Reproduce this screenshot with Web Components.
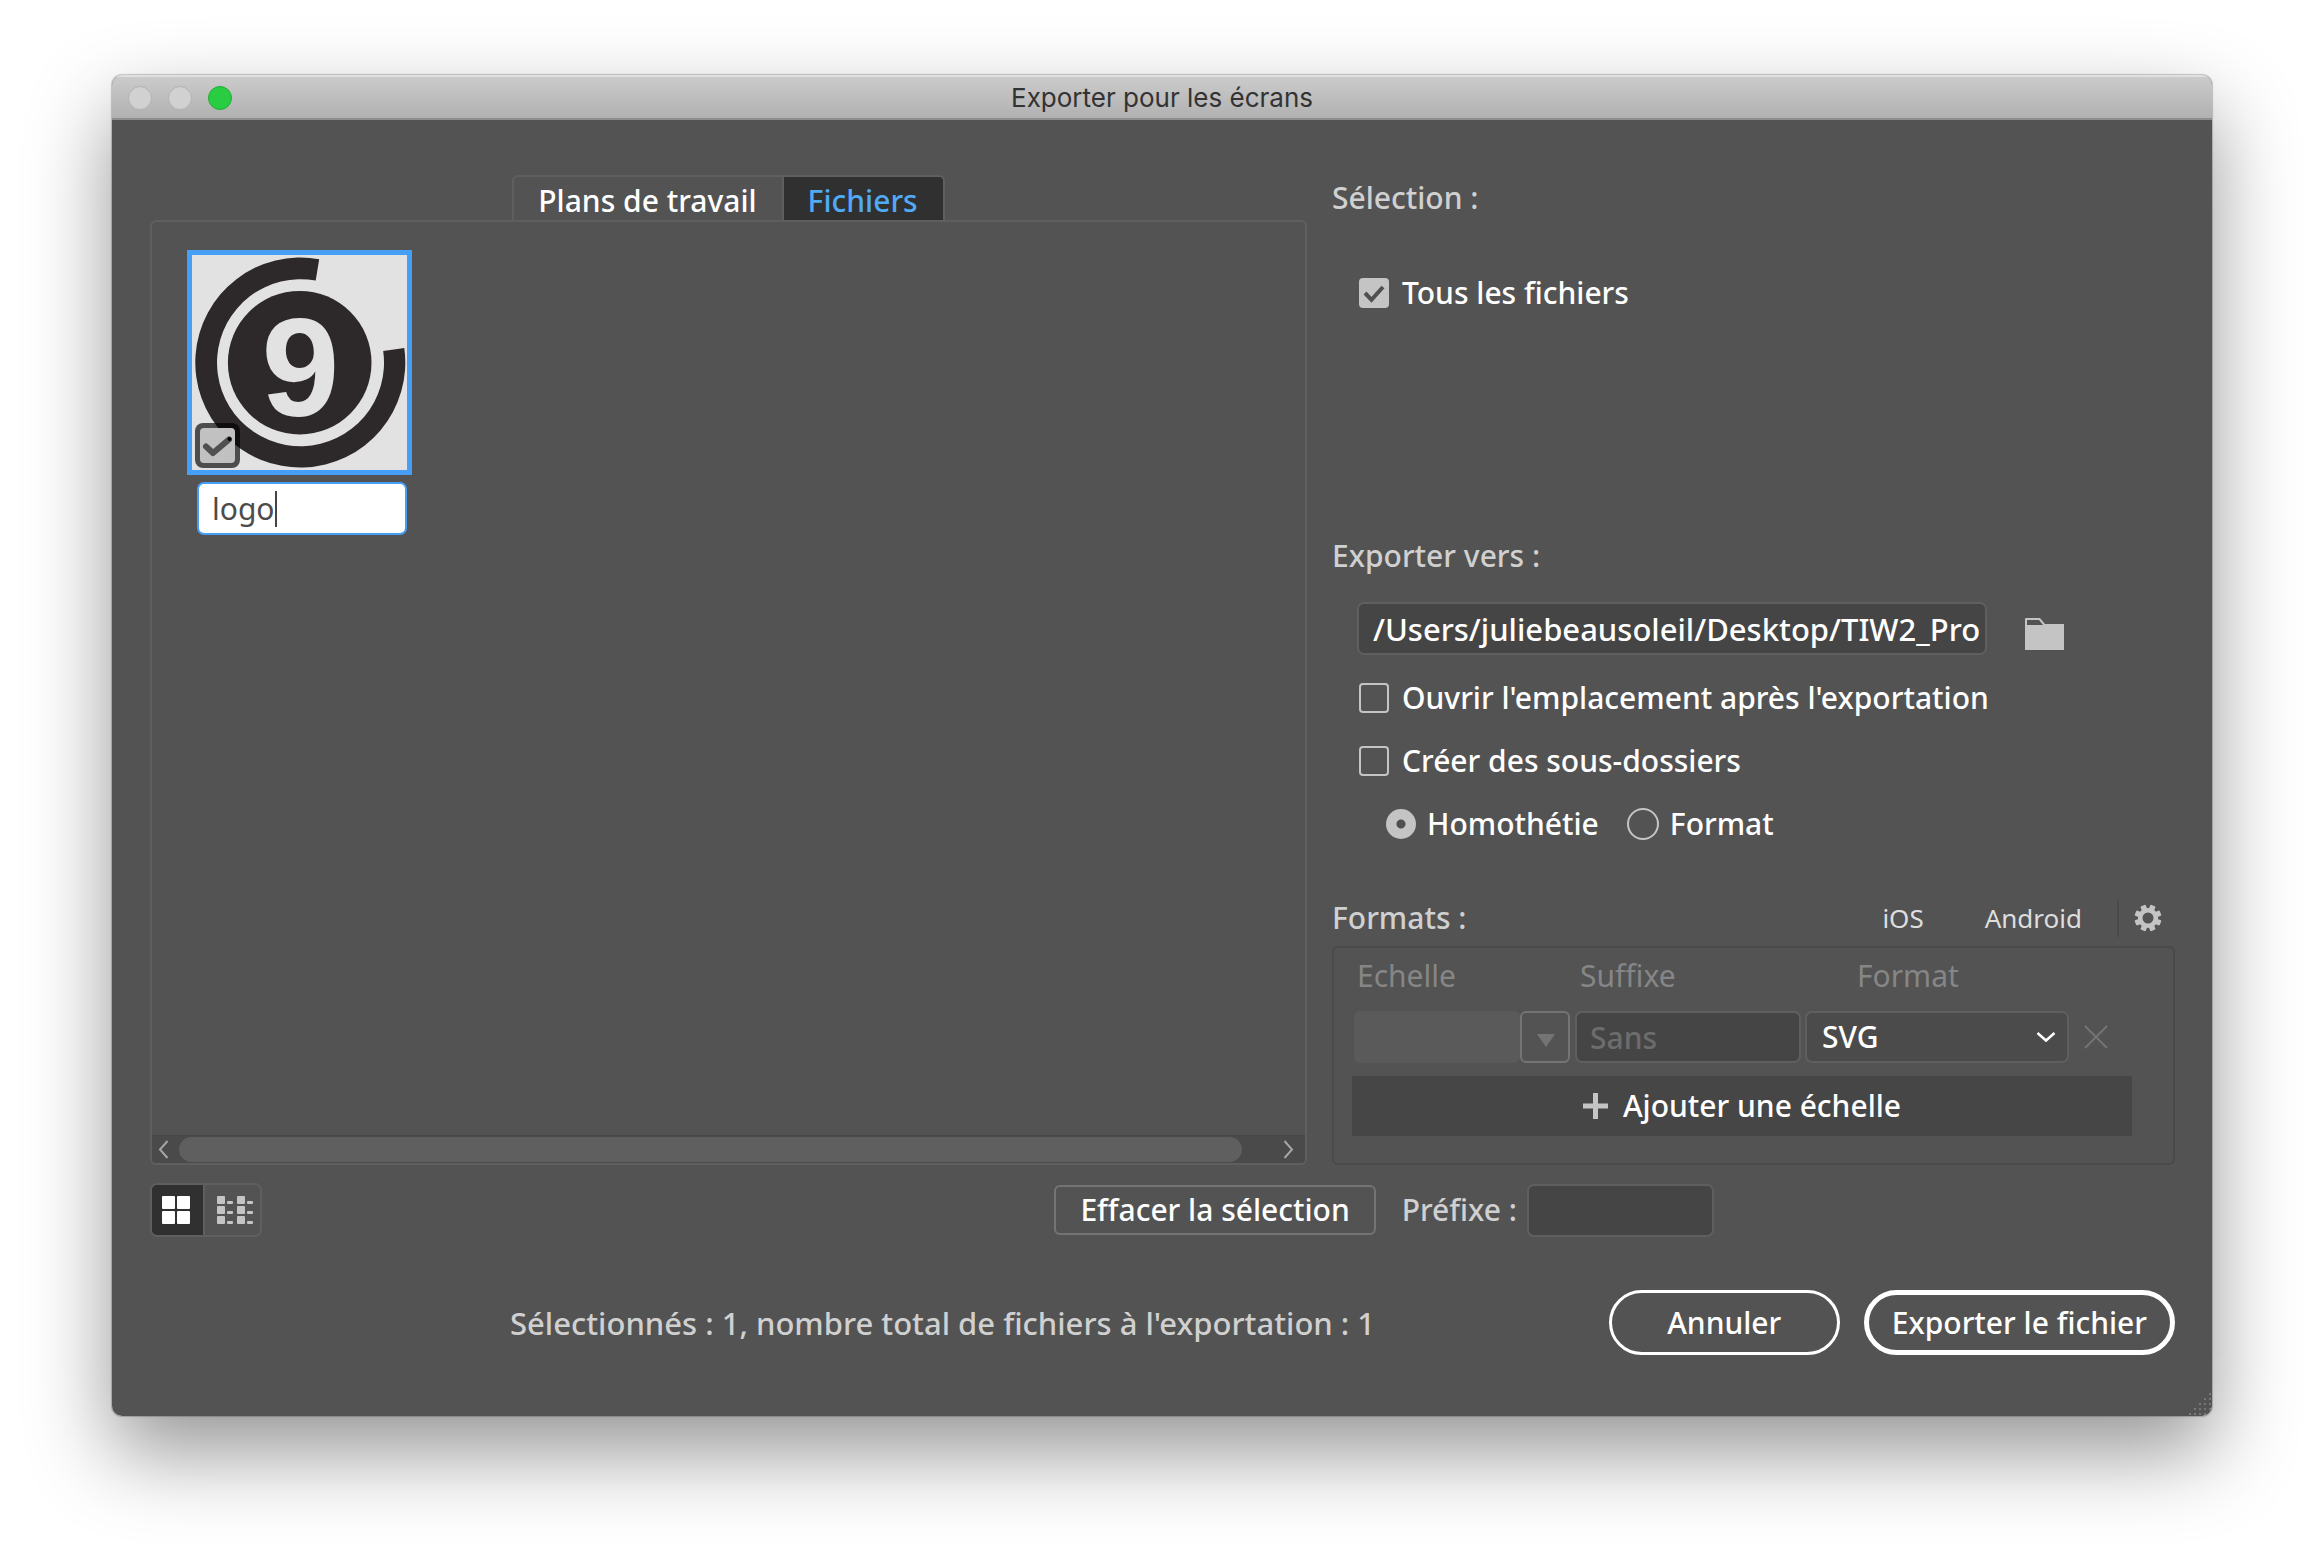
<!DOCTYPE html>
<html lang="fr">
<head>
<meta charset="utf-8">
<title>Exporter pour les écrans</title>
<style>
  body {
    margin: 0;
    background: #fff;
    font: 500 30px/40px "Noto Sans", "Open Sans", sans-serif;
    color: #fff;
    --panel: #535353;
    --field: #454545;
    --line: #5f5f5f;
    --label: #d0d0d0;
    --icon: #c4c4c4;
    --accent: #469ff5;
  }
</style>
</head>
<body>
<export-dialog heading="Exporter pour les écrans">
  <file-browser slot="files"></file-browser>
  <export-settings slot="settings"></export-settings>
  <view-toggle slot="tools"></view-toggle>
  <push-button slot="tools" class="clear">Effacer la sélection</push-button>
  <prefix-field slot="tools"></prefix-field>
  <span slot="status">Sélectionnés : 1, nombre total de fichiers à l'exportation : 1</span>
  <push-button slot="actions" kind="pill">Annuler</push-button>
  <push-button slot="actions" kind="primary">Exporter le fichier</push-button>
</export-dialog>

<script>
const base = `
  *, *::before, *::after { box-sizing: border-box; }
  :host { display: block; box-sizing: border-box; }
  button, input, select { font: inherit; color: inherit; margin: 0; padding: 0; border: 0; background: none; outline: 0; appearance: none; }
  button { cursor: pointer; }
  svg { display: block; }
`;
function define(name, render) {
  customElements.define(name, class extends HTMLElement {
    constructor() { super(); this.attachShadow({ mode: 'open' }); }
    connectedCallback() { this.shadowRoot.innerHTML = '<style>' + base + '</style>' + render(this); }
  });
}

/* Window frame, title bar and the regions of the dialog */
define('export-dialog', el => `
<style>
  :host { min-height: 100vh; padding: 75px 112px; }
  .window { position: relative; border-radius: 10px; background: var(--panel); overflow: hidden; }
  .shadow { border-radius: 10px; box-shadow: 0 0 1px 1px rgba(0,0,0,.2), 0 36px 84px rgba(0,0,0,.42); }
  header { display: grid; grid-template-columns: 1fr auto 1fr; align-items: center; height: 45px; padding: 2px 16px 0;
    background: linear-gradient(#cccccc, #b1b1b1); border-bottom: 2px solid #8e8e8e; box-shadow: inset 0 2px #e0e0e0; color: #333; }
  .lights { display: flex; gap: 16px; }
  .lights i { width: 24px; height: 24px; border-radius: 50%; background: #d1d1d1; border: 1px solid #b2b2b2; }
  .lights i:last-child { background: #28cd41; border-color: #20ae33; }
  h1 { margin: 0; font: 400 26px/40px Inter, "Liberation Sans", sans-serif; }
  main { display: grid; grid-template-columns: minmax(0, 1fr) 843px; column-gap: 25px; padding: 55px 37px 61px 38px; }
  .tools { grid-column: 1 / -1; display: flex; align-items: center; margin-top: 18px; padding-right: 461px; height: 54px; }
  footer { grid-column: 1 / -1; display: flex; align-items: center; gap: 24px; margin-top: 53px; padding-left: 360px; }
  .status { flex: 1; color: var(--label); font-size: 31px; }
  ::slotted(.clear) { margin-left: auto; margin-right: 26px; }
  .grip { position: absolute; right: 0; bottom: 0; }
</style>
<div class="shadow"><section class="window">
  <header><div class="lights"><i></i><i></i><i></i></div><h1>${el.getAttribute('heading')}</h1></header>
  <main>
    <slot name="files"></slot>
    <slot name="settings"></slot>
    <div class="tools"><slot name="tools"></slot></div>
    <footer><div class="status"><slot name="status"></slot></div><slot name="actions"></slot></footer>
  </main>
  <svg class="grip" width="23" height="23" fill="#777">${[0, 1, 2, 3, 4].map(r => Array.from({ length: r + 1 }, (_, i) => `<rect x="${20 - i * 5}" y="${r * 5}" width="2" height="2"/>`).join('')).join('')}</svg>
</section></div>`);

/* Tabs above a scrolling area of file thumbnails */
define('file-browser', () => `
<style>
  :host { display: flex; flex-direction: column; }
  .tabs { display: flex; align-self: center; height: 45px; border: 2px solid var(--line); border-bottom: 0; border-radius: 6px 6px 0 0; overflow: hidden; }
  .tabs button { padding: 5px 25px 0 24px; line-height: 36px; }
  .tabs button + button { border-left: 2px solid var(--line); background: #303030; color: #50aaf5; }
  .area { flex: 1; display: flex; flex-direction: column; border: 2px solid var(--line); border-radius: 6px; overflow: hidden; }
  .items { flex: 1; display: flex; align-items: flex-start; padding: 28px 35px; }
  .bar { display: flex; align-items: center; gap: 10px; height: 28px; padding: 0 11px 0 6px; background: #4a4a4a; border-top: 1px solid #464646; }
  .bar i { flex: 1; height: 25px; margin-right: 31px; border-radius: 13px; background: #5f5f5f; }
</style>
<div class="tabs" role="tablist">
  <button role="tab" aria-selected="false">Plans de travail</button><button role="tab" aria-selected="true">Fichiers</button>
</div>
<div class="area">
  <div class="items"><file-thumb></file-thumb></div>
  <div class="bar">
    <svg width="11" height="19" fill="none" stroke="#a5a5a5" stroke-width="2"><path d="M9.500 1L2 9.500L9.500 18"/></svg>
    <i></i>
    <svg width="11" height="19" fill="none" stroke="#a5a5a5" stroke-width="2"><path d="M1.500 1L9 9.500L1.500 18"/></svg>
  </div>
</div>`);

/* One file: artwork, selection tick and editable name */
define('file-thumb', () => `
<style>
  :host { width: 225px; }
  .art { position: relative; border: 5px solid var(--accent); background: #e2e2e2; }
  .art svg.logo { width: 100%; }
  .tick { position: absolute; left: 3px; bottom: 2px; width: 45px; height: 45px; border-radius: 8px; background: rgba(0,0,0,.66); display: grid; place-items: center; }
  .tick input, .tick svg { grid-area: 1 / 1; width: 35px; height: 35px; border-radius: 4px; }
  .tick input { background: #c1c1c1; }
  .name { display: flex; align-items: center; height: 53px; margin: 7px 5px 0 10px; padding-left: 13px; border: 2px solid var(--accent); border-radius: 7px; background: #fff; color: #4c4c4c; font-weight: 400; }
  .name input { field-sizing: content; }
  .name i { width: 2px; height: 36px; background: #444; }
</style>
<div class="art">
  <svg class="logo" viewBox="0 0 215 215" fill="#2d2829">
    <path d="M127.200 4.200A105 105 0 1 0 212.300 93L191.200 96A83.500 83.500 0 1 1 123.700 25.600Z"/>
    <circle cx="107.700" cy="107.700" r="71.800"/>
    <text x="108.500" y="161" text-anchor="middle" font-family="Liberation Sans, Arial, sans-serif" font-weight="700" font-size="140" fill="#e2e2e2">9</text>
  </svg>
  <label class="tick"><input type="checkbox" checked aria-label="Sélectionner logo">
    <svg viewBox="0 0 35 35" fill="none" stroke="#505050" stroke-width="6" stroke-linecap="round" stroke-linejoin="round"><path d="M6 18.500L13 25L29 11.500"/><circle cx="29.500" cy="11" r="2" fill="#000" stroke="none"/></svg>
  </label>
</div>
<div class="name"><input type="text" value="logo" aria-label="Nom du fichier"><i></i></div>`);

/* Tick box with its label */
define('check-option', el => `
<style>
  label { display: flex; align-items: center; gap: 13px; height: 40px; }
  span { display: grid; }
  input, svg { grid-area: 1 / 1; width: 30px; height: 30px; }
  input { border: 2px solid var(--icon); border-radius: 4px; }
  input:checked { background: var(--icon); }
  svg { visibility: hidden; }
  input:checked + svg { visibility: visible; }
</style>
<label><span><input type="checkbox" ${el.hasAttribute('checked') ? 'checked' : ''}><svg viewBox="0 0 30 30" fill="none" stroke="#505050" stroke-width="4"><path d="M6 15L12.500 21.800L24 9"/></svg></span><slot></slot></label>`);

define('folder-mode', () => `
<style>
  :host { display: flex; gap: 28px; }
  label { display: flex; align-items: center; gap: 11px; height: 40px; }
  input { width: 32px; height: 32px; border: 2px solid var(--icon); border-radius: 50%; }
  input:checked { width: 30px; height: 30px; border: 0; background: radial-gradient(circle, #505050 4px, var(--icon) 5px); }
</style>
<label><input type="radio" name="mode" checked>Homothétie</label>
<label><input type="radio" name="mode">Format</label>`);

/* Right-hand column */
define('export-settings', () => `
<style>
  :host { padding-top: 3px; }
  h2 { margin: 0; font: inherit; color: var(--label); }
  .all { margin: 55px 0 223px 27px; }
  .target { display: flex; flex-direction: column; gap: 23px; margin: 26px 0 54px 27px; }
  .path { display: flex; align-items: center; margin-left: -2px; }
  .path input { width: 630px; height: 53px; padding: 0 4px 0 14px; border: 2px solid var(--line); border-radius: 7px; background: var(--field); font-size: 31px; }
  .path button { margin: 10px 0 0 37px; }
  folder-mode { margin-left: 27px; }
  .bar { display: flex; align-items: center; }
  .bar h2 { flex: 1; }
  .bar button { color: #dedede; font-size: 26px; font-weight: 400; }
  .ios { margin-right: 61px; }
  .sep { width: 2px; height: 38px; margin: 0 15px 0 35px; background: #4a4a4a; }
  .gear { margin-right: 13px; }
  format-list { margin-top: 8px; }
</style>
<h2>Sélection :</h2>
<check-option class="all" checked>Tous les fichiers</check-option>
<h2>Exporter vers :</h2>
<div class="target">
  <div class="path">
    <input type="text" value="/Users/juliebeausoleil/Desktop/TIW2_Pro" aria-label="Exporter vers">
    <button aria-label="Choisir un dossier"><svg width="41" height="34"><path d="M1 33V2Q1 1 2 1H16L21 7H40V33Z" fill="#c4c4c4"/><path d="M3 3H15L19 8H3Z" fill="#535353"/></svg></button>
  </div>
  <check-option>Ouvrir l'emplacement après l'exportation</check-option>
  <check-option>Créer des sous-dossiers</check-option>
  <folder-mode></folder-mode>
</div>
<div class="bar">
  <h2>Formats :</h2>
  <button class="ios">iOS</button><button>Android</button><i class="sep"></i>
  <button class="gear" aria-label="Réglages"><svg width="28" height="28" viewBox="-14 -14 28 28"><circle r="7.800" fill="none" stroke="#c4c4c4" stroke-width="4.600"/><g fill="#c4c4c4">${[22.5,67.5,112.5,157.5,202.5,247.5,292.5,337.5].map(a => `<rect x="-2.800" y="-13.500" width="5.600" height="5" rx="1.200" transform="rotate(${a})"/>`).join('')}</g></svg></button>
</div>
<format-list></format-list>`);

/* Scale / suffix / format table */
define('format-list', () => `
<style>
  :host { border: 2px solid #4a4a4a; border-radius: 6px; padding: 8px 41px 27px 18px; }
  table { width: 100%; table-layout: fixed; border-collapse: collapse; }
  th { height: 40px; padding: 0 0 0 5px; text-align: left; font-weight: 400; color: #868686; }
  th:nth-child(3) { padding-left: 52px; }
  td { padding: 15px 4px 0 0; height: 67px; }
  td:first-child { padding: 15px 5px 0 2px; }
  .scale { display: flex; height: 52px; }
  .scale input { flex: 1; min-width: 0; border-radius: 6px; background: #5a5a5a; }
  .scale button { width: 50px; border: 2px solid #747474; border-radius: 6px; display: grid; place-items: center; padding: 6px 0 0 2px; }
  td > input, select { display: block; width: 100%; height: 52px; padding-left: 13px; border: 2px solid var(--line); border-radius: 7px; background: var(--field); }
  input::placeholder { color: #6c6c6c; opacity: 1; }
  .pick { display: grid; align-items: center; }
  .pick select, .pick svg { grid-area: 1 / 1; }
  .pick svg { justify-self: end; margin-right: 13px; pointer-events: none; }
  select { background: #4b4b4b; padding-left: 15px; }
  .remove { display: block; margin-left: 11px; }
  .add { display: flex; align-items: center; justify-content: center; gap: 15px; width: 100%; height: 60px; margin-top: 13px; background: #464646; }
</style>
<table>
  <colgroup><col style="width:223px"><col style="width:230px"><col style="width:268px"><col></colgroup>
  <thead><tr><th>Echelle</th><th>Suffixe</th><th>Format</th><th></th></tr></thead>
  <tbody><tr>
    <td><div class="scale"><input type="text" disabled aria-label="Echelle"><button disabled aria-label="Choisir une échelle"><svg width="18" height="13"><path d="M0 0H18L9 13Z" fill="#747474"/></svg></button></div></td>
    <td><input type="text" placeholder="Sans" aria-label="Suffixe"></td>
    <td><div class="pick"><select aria-label="Format"><option>SVG</option></select><svg width="20" height="12" fill="none" stroke="#fff" stroke-width="2.500"><path d="M1.500 2L10 9.500L18.500 2"/></svg></div></td>
    <td><button class="remove" aria-label="Supprimer"><svg width="24" height="24" stroke="#747474" stroke-width="2"><path d="M1 1L23 23M23 1L1 23"/></svg></button></td>
  </tr></tbody>
</table>
<button class="add"><svg width="25" height="26" stroke="#c4c4c4" stroke-width="5"><path d="M12.500 0V26M0 13H25"/></svg>Ajouter une échelle</button>`);

/* Grid / list switch */
define('view-toggle', () => `
<style>
  :host { display: flex; height: 54px; border: 2px solid var(--line); border-radius: 7px; overflow: hidden; }
  button { width: 51px; padding-right: 3px; display: grid; place-items: center; background: #303030; }
  button + button { width: 57px; padding: 0 0 0 4px; border-left: 2px solid var(--line); background: none; }
</style>
<button aria-label="Vignettes"><svg width="28" height="28" fill="#fff"><rect width="13" height="13" rx="1"/><rect x="15" width="13" height="13" rx="1"/><rect y="15" width="13" height="13" rx="1"/><rect x="15" y="15" width="13" height="13" rx="1"/></svg></button>
<button aria-label="Liste"><svg width="36" height="28" fill="#c4c4c4">${[0, 20].map(x => [0, 10, 20].map(y => `<rect x="${x}" y="${y}" width="8" height="8" rx="1"/><rect x="${x + 10}" y="${y + 5}" width="6" height="3" rx="1"/>`).join('')).join('')}</svg></button>`);

define('prefix-field', () => `
<style>
  label { display: flex; align-items: center; gap: 10px; color: var(--label); }
  input { width: 187px; height: 53px; border: 2px solid var(--line); border-radius: 7px; background: var(--field); }
</style>
<label>Préfixe :<input type="text"></label>`);

define('push-button', el => `
<style>
  button { display: block; height: 50px; padding: 0 24px; border: 2px solid #747474; border-radius: 6px; }
  .pill, .primary { height: 65px; min-width: 231px; border: 3px solid #fff; border-radius: 33px; }
  .primary { border-width: 5px; padding: 0 23px; }
</style>
<button class="${el.getAttribute('kind') || ''}"><slot></slot></button>`);
</script>
</body>
</html>
